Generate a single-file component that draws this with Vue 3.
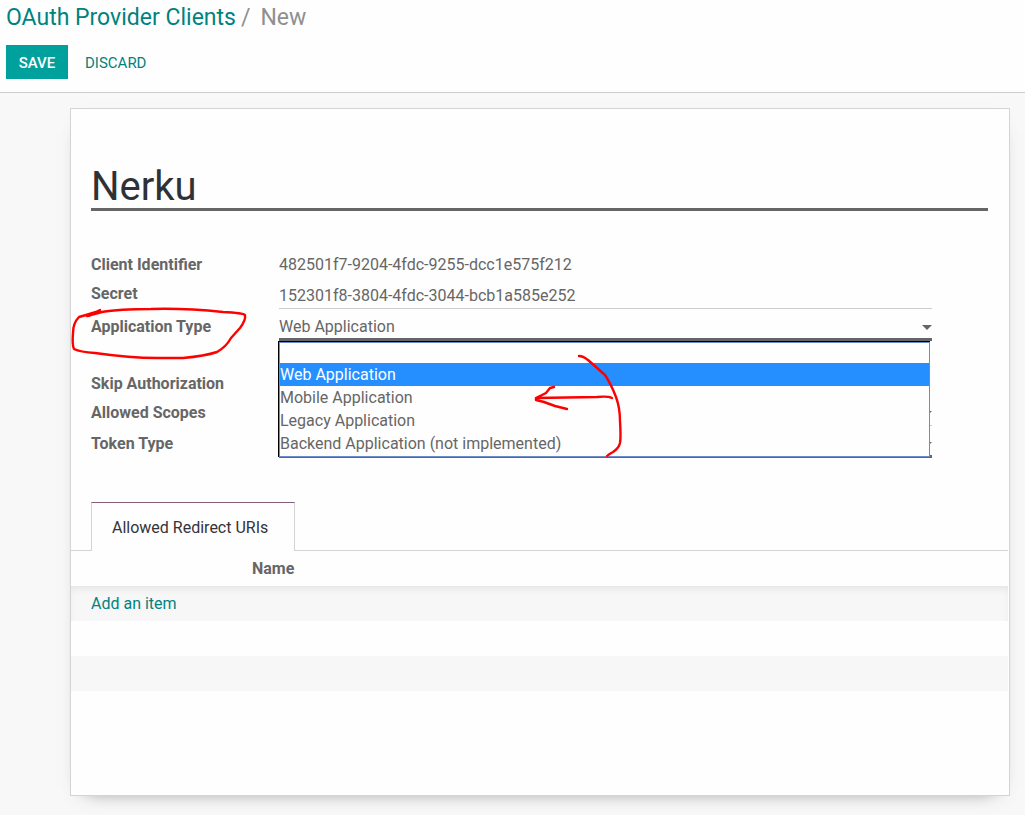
<script setup>
import { ref } from 'vue'

const name = ref('Nerku')
const secret = ref('152301f8-3804-4fdc-3044-bcb1a585e252')
const applicationType = ref('Web Application')
const skipAuthorization = ref(false)
const scope = ref('')
const tokenType = ref('')

const types = [
  '',
  'Web Application',
  'Mobile Application',
  'Legacy Application',
  'Backend Application (not implemented)',
]
</script>

<template>
  <div class="page">
    <header class="control-panel">
      <nav class="breadcrumb" aria-label="Breadcrumb">
        <a href="#">OAuth Provider Clients</a>
        <span class="sep">/</span>
        <span class="current">New</span>
      </nav>
      <div class="actions">
        <button type="button" class="btn save">SAVE</button>
        <button type="button" class="btn discard">DISCARD</button>
      </div>
    </header>

    <main class="sheet">
      <form @submit.prevent>
        <input v-model="name" class="title" type="text" aria-label="Name" />

        <div class="group">
          <div class="row">
            <span class="label">Client Identifier</span>
            <span class="value">482501f7-9204-4fdc-9255-dcc1e575f212</span>
          </div>
          <div class="row text">
            <label class="label" for="secret">Secret</label>
            <input id="secret" v-model="secret" class="field" type="text" />
          </div>
          <div class="row choice">
            <label class="label" for="app-type">Application Type
              <svg class="loop" width="180" height="56" viewBox="0 0 180 56" aria-hidden="true">
                <path d="M33 6 L24 11 M35 5 L31 7 L21 10 L14 12 Q8 18 8 28 Q7 40 9 44 Q15 47 30 48 Q65 53 92 53 L118 53 Q140 51 152 47 Q161 42 166 33 L175 23 Q181 15 180 10 Q178 8 158 7 Q120 3 86 4 Q54 4 37 7 L22 11" transform="translate(-1 0)" />
              </svg>
            </label>
            <div class="select-wrap">
              <select id="app-type" v-model="applicationType" class="field">
                <option v-for="type in types" :key="type">{{ type }}</option>
              </select>
              <span class="caret"></span>
              <div class="popup">
                <ul role="listbox" aria-label="Application Type">
                  <li
                    v-for="type in types"
                    :key="type"
                    role="option"
                    :aria-selected="type === applicationType"
                    :class="{ active: type === applicationType }"
                    @click="applicationType = type"
                  >{{ type }}</li>
                </ul>
                <svg class="arrow" width="100" height="110" viewBox="0 0 100 110" aria-hidden="true">
                  <path d="M49 5 Q53 5 58 9 L66 16 L75 24 Q81 33 86 46 Q90 57 90 70 Q91 86 90 92 Q89 97 83 101 Q79 103 77 105" />
                  <path d="M82 47 Q78 45 67 46 L6 47 M24 36 L20 37 L16 42 L6 47 L6 49 L14 51 L25 55 L37 58" />
                </svg>
              </div>
            </div>
          </div>
          <div class="row second">
            <label class="label" for="skip">Skip Authorization</label>
            <input id="skip" v-model="skipAuthorization" class="check" type="checkbox" />
          </div>
          <div class="row scopes">
            <label class="label" for="scopes">Allowed Scopes</label>
            <div class="select-wrap">
              <input id="scopes" v-model="scope" class="field" type="text" />
              <span class="caret"></span>
            </div>
          </div>
          <div class="row choice">
            <label class="label" for="token">Token Type</label>
            <div class="select-wrap">
              <select id="token" v-model="tokenType" class="field"></select>
              <span class="caret"></span>
            </div>
          </div>
        </div>

        <div class="tabs" role="tablist">
          <button type="button" class="tab" role="tab" aria-selected="true">Allowed Redirect URIs</button>
        </div>
        <table class="uris">
          <thead>
            <tr><th scope="col">Name</th></tr>
          </thead>
          <tbody>
            <tr class="first"><td><a href="#">Add an item</a></td></tr>
            <tr><td></td></tr>
            <tr><td></td></tr>
          </tbody>
        </table>
      </form>
    </main>
  </div>
</template>

<style>
body {
  background: #f8f8f8;
}
</style>

<style scoped>
* {
  box-sizing: border-box;
}
.page {
  color: #666;
  font: 16px/24px Roboto, "Open Sans", sans-serif;
}
a {
  color: #00827f;
  text-decoration: none;
}
input,
select,
button {
  margin: 0;
  border: 0;
  border-radius: 0;
  outline: 0;
  background: transparent;
  color: inherit;
  font: inherit;
}
.control-panel {
  padding: 3px 6px 13px;
  border-bottom: 1px solid #ccc;
  background: #fefefe;
}
.breadcrumb {
  display: flex;
  gap: 5px;
  height: 30px;
  font-size: 23px;
  line-height: 30px;
}
.breadcrumb .current {
  margin-left: 5px;
}
.sep,
.current {
  color: #8f8f8f;
}
.actions {
  display: flex;
  gap: 5px;
  margin-top: 12px;
}
.btn {
  height: 34px;
  padding: 2px 12px 0;
  font-size: 15px;
  line-height: 32px;
  font-weight: 500;
}
.save {
  min-width: 62px;
  background: #00a09d;
  color: #fff;
}
.discard {
  color: #00827f;
  font-weight: 400;
}
.sheet {
  margin: 15px 15px 19px 70px;
  padding: 49px 0 104px;
  border: 1px solid #d4d4d4;
  background: #fefefe;
  box-shadow: 0 8px 20px -16px rgba(0, 0, 0, 0.7);
}
.title {
  display: block;
  width: calc(100% - 41px);
  height: 53px;
  margin: 0 21px 0 20px;
  padding: 6px 0 0;
  border-bottom: 3px solid #666;
  color: #2f3136;
  font-size: 40px;
  line-height: 44px;
}
.group {
  margin: 39px 77px 0 20px;
}
.row {
  display: grid;
  grid-template-columns: 188px 1fr;
  height: 29px;
}
.label {
  position: relative;
  padding-top: 3px;
  font-weight: 700;
}
.value {
  padding-top: 3px;
}
.field {
  display: block;
  width: 100%;
  height: 100%;
  padding: 3px 0 0;
  border-bottom: 1px solid #ccc;
  appearance: none;
}
.text {
  height: 30px;
}
.choice {
  height: 32px;
}
.choice .label {
  height: 32px;
  padding-top: 6px;
}
.choice .field {
  height: 32px;
  padding-top: 6px;
  border-bottom: 3px solid #666;
  line-height: 22px;
}
.second {
  margin-top: 28px;
}
.scopes {
  height: 28px;
}
.check {
  align-self: center;
  justify-self: start;
}
.select-wrap {
  position: relative;
}
.caret {
  position: absolute;
  top: 16px;
  right: 0;
  border: 5px solid transparent;
  border-top-color: #666;
  border-bottom: 0;
}
.scopes .caret {
  top: 13px;
}
.popup {
  position: absolute;
  z-index: 1;
  top: 32px;
  left: -1px;
  right: 2px;
  border-top: 1px solid #000;
  border-left: 1px solid #000;
}
.popup ul {
  margin: 0;
  padding: 0;
  border: 1px solid #6b8bcb;
  background: #fefefe;
  list-style: none;
}
.popup li {
  height: 23px;
  line-height: 23px;
}
.popup li:first-child {
  height: 20px;
}
.popup li:last-child {
  height: 24px;
}
.popup .active {
  background: #258fff;
  color: #fff;
}
.loop,
.arrow {
  position: absolute;
  fill: none;
  stroke: #f00;
  stroke-width: 2.4;
  stroke-linecap: round;
  stroke-linejoin: round;
  pointer-events: none;
  overflow: visible;
}
.loop {
  top: -4px;
  left: -25px;
}
.arrow {
  top: 9px;
  left: 251px;
}
.tabs {
  margin: 44px 1px 0 0;
  padding-left: 20px;
  border-bottom: 1px solid #d4d4d4;
}
.tab {
  display: block;
  min-width: 204px;
  height: 49px;
  margin-bottom: -1px;
  padding: 2px 20px 0;
  border: 1px solid #d4d4d4;
  border-top-color: #875a7b;
  border-bottom: 0;
  background: #fefefe;
  color: #33333b;
  text-align: left;
}
.uris {
  width: calc(100% - 1px);
  border-collapse: collapse;
}
.uris th {
  height: 35px;
  padding: 0 0 0 181px;
  text-align: left;
  font-weight: 700;
}
.uris td {
  height: 35px;
  padding: 0 20px;
}
.uris tbody tr:nth-child(odd) {
  background: #f7f7f7;
}
.uris .first {
  box-shadow: inset 0 5px 10px -4px #ddd;
}
</style>
